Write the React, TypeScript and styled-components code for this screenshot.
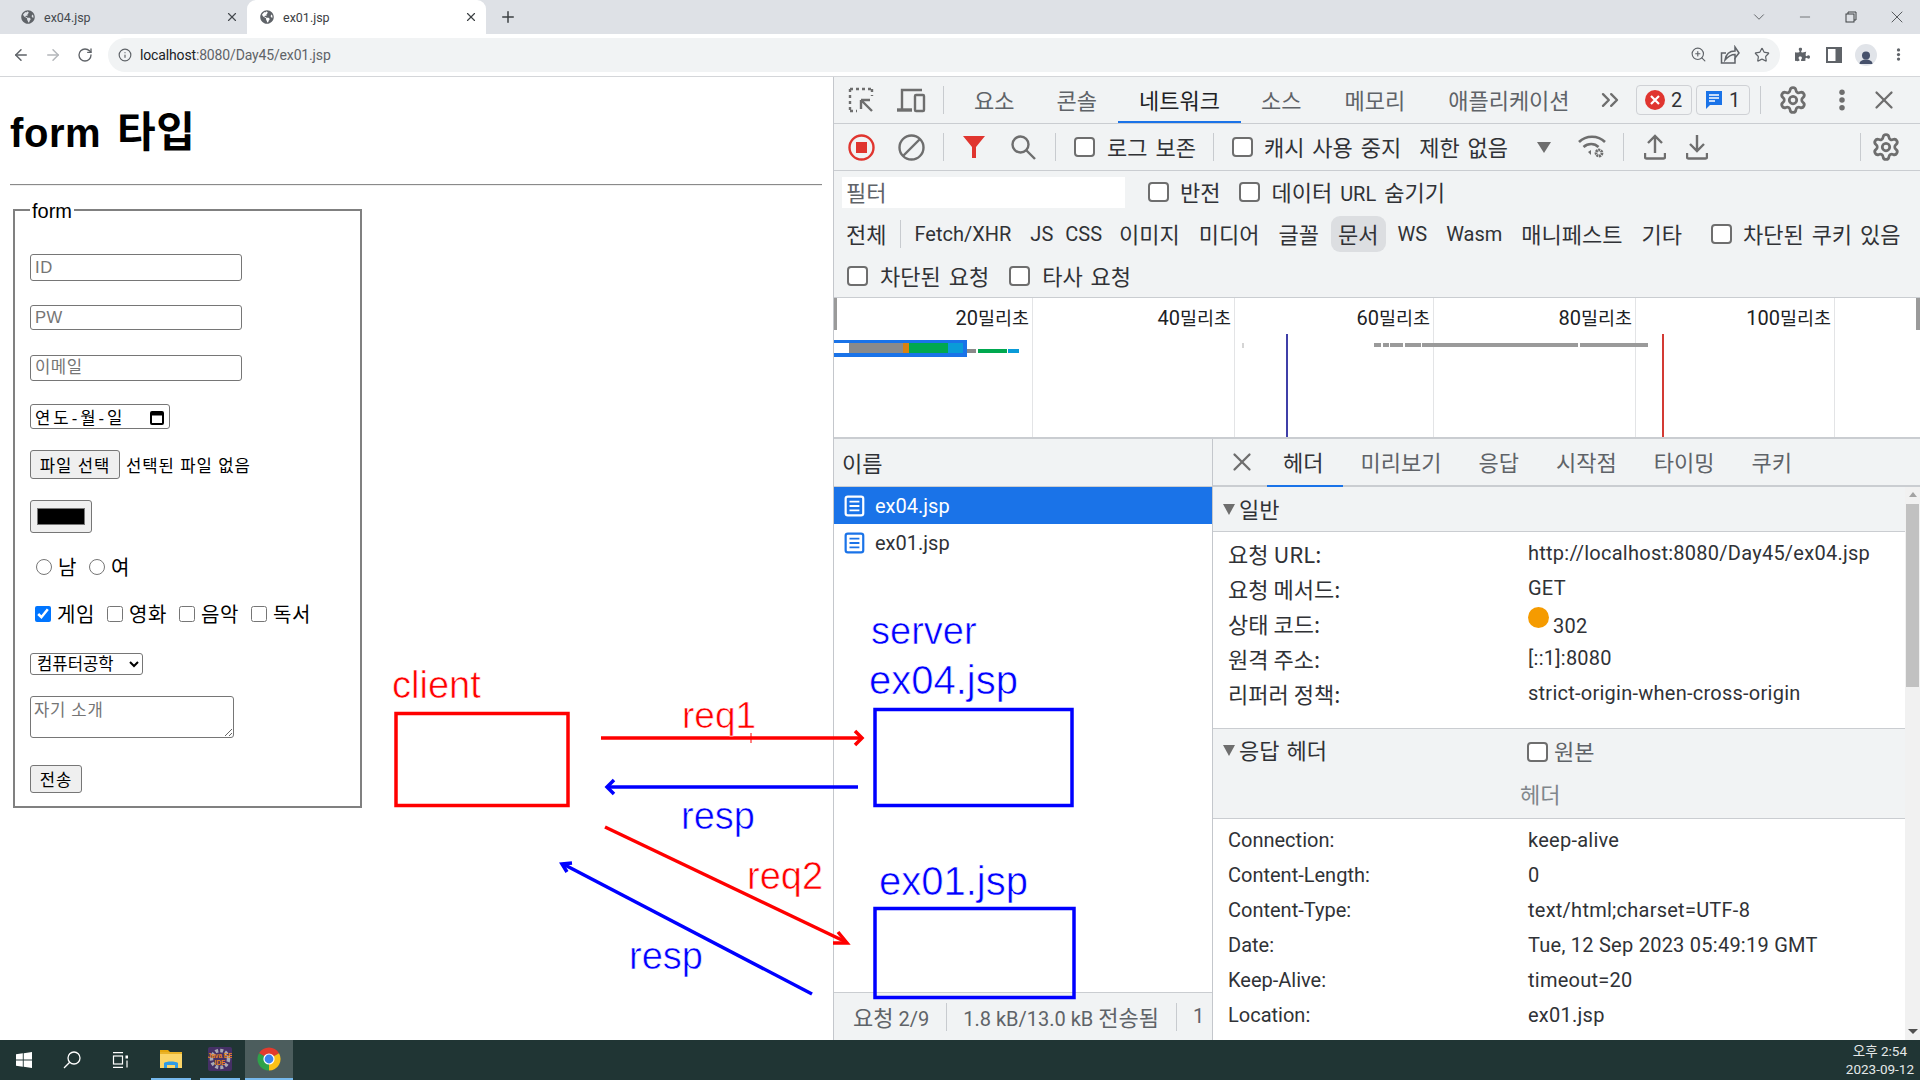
import React from 'react';
import styled, { createGlobalStyle } from 'styled-components';
import {
	ArrowLeft,
	ArrowRight,
	ChevronDown,
	ChevronsRight,
	Info,
	Minus,
	Plus,
	RotateCw,
	Settings,
	Star,
	X,
	ZoomIn,
} from 'lucide-react';
import { FaGlobeAmericas, FaPuzzlePiece } from 'react-icons/fa';

const KO = '"Noto Sans CJK KR", sans-serif';
const UI = 'Roboto, "Noto Sans CJK KR", sans-serif';
const PAGE = '"Liberation Sans", "Noto Sans CJK KR", sans-serif';

const GlobalStyle = createGlobalStyle`
	html, body {
		margin: 0;
		padding: 0;
		background: #fff;
	}
	* {
		box-sizing: border-box;
	}
`;

const Screen = styled.div`
	position: relative;
	display: flex;
	flex-direction: column;
	width: 1920px;
	height: 1080px;
	overflow: hidden;
	font-family: ${UI};
	color: #202124;
`;

/* browser chrome */

const TabStrip = styled.div`
	display: flex;
	align-items: stretch;
	height: 34px;
	background: #dee1e6;
`;

const Tab = styled.div<{ $active?: boolean }>`
	display: flex;
	align-items: center;
	width: ${(p) => (p.$active ? 239 : 247)}px;
	padding: 0 8px 0 ${(p) => (p.$active ? 13 : 21)}px;
	border-radius: 9px 9px 0 0;
	background: ${(p) => (p.$active ? '#fff' : 'transparent')};
	font-size: 12.5px;
	color: ${(p) => (p.$active ? '#3c4043' : '#45494e')};
	svg {
		flex: none;
	}
`;

const TabTitle = styled.span`
	flex: 1;
	margin-left: 9px;
`;

const NewTab = styled.div`
	display: flex;
	align-items: center;
	margin-left: 13px;
	color: #3c4043;
`;

const WindowControls = styled.div`
	display: flex;
	align-items: center;
	margin-left: auto;
	color: #3c4043;
`;

const WindowButton = styled.div`
	display: flex;
	align-items: center;
	justify-content: center;
	width: 46px;
	height: 28px;
`;

const AddressRow = styled.div`
	display: flex;
	align-items: center;
	height: 43px;
	padding-bottom: 1px;
	border-bottom: 1px solid #d4d6d9;
	background: #fff;
	color: #5f6368;
`;

const NavButton = styled.div`
	display: flex;
	align-items: center;
	justify-content: center;
	flex: none;
	width: 32px;
`;

const NavGroup = styled.div`
	display: flex;
	width: 108px;
	padding-left: 5px;
`;

const Omnibox = styled.div`
	display: flex;
	align-items: center;
	width: 1672px;
	height: 34px;
	padding: 0 7px 0 10px;
	border-radius: 17px;
	background: #f1f3f4;
`;

const Url = styled.span`
	margin-left: 8px;
	font-size: 14px;
	letter-spacing: -0.15px;
	color: #5f6368;
	b {
		font-weight: 400;
		color: #202124;
	}
`;

const OmniIcons = styled.div`
	display: flex;
	align-items: center;
	gap: 10px;
	margin-left: auto;
`;

const OmniIcon = styled.div`
	display: flex;
	justify-content: center;
	width: 22px;
`;

const BrowserIcons = styled.div`
	display: flex;
	align-items: center;
	padding-left: 6px;
`;

const BrowserIcon = styled.div`
	display: flex;
	align-items: center;
	justify-content: center;
	width: 32px;
`;

const Avatar = styled.div`
	display: flex;
	align-items: flex-end;
	justify-content: center;
	width: 22px;
	height: 22px;
	border-radius: 50%;
	background: #e1e4e9;
	overflow: hidden;
`;

/* main area */

const Main = styled.div`
	display: flex;
	flex: 1;
	min-height: 0;
`;

const Page = styled.div`
	width: 833px;
	padding: 0 11px 0 10px;
	font-family: ${PAGE};
	color: #000;
`;

const Heading = styled.h1`
	margin: 0;
	height: 107px;
	padding-top: 33px;
	font-size: 40px;
	line-height: 46px;
	font-weight: 700;
	word-spacing: 4px;
	letter-spacing: 0.6px;
	span {
		font-size: 42px;
	}
`;

const Rule = styled.hr`
	margin: 0;
	height: 2px;
	border: none;
	border-top: 1px solid #8a8a8a;
	border-bottom: 1px solid #eee;
`;

const Fieldset = styled.fieldset`
	display: flex;
	flex-direction: column;
	align-items: flex-start;
	width: 349px;
	height: 610px;
	margin: 12px 0 0 3px;
	padding: 0 15px;
	border: 2px solid #808080;
	font-size: 20px;
`;

const Legend = styled.legend`
	padding: 0 2px;
	margin-left: 0;
	font-size: 20px;
	line-height: 23px;
	transform: translateY(2px);
`;

const TextInput = styled.input<{ $top: number; $h: number }>`
	width: 212px;
	height: ${(p) => p.$h}px;
	margin-top: ${(p) => p.$top}px;
	padding: 0 4px;
	border: 1px solid #767676;
	border-radius: 3px;
	outline: none;
	background: #fff;
	font-family: ${PAGE};
	font-size: 16.67px;
	&::placeholder {
		color: #757575;
		letter-spacing: 0.5px;
	}
`;

const DateField = styled.div`
	display: flex;
	align-items: center;
	justify-content: space-between;
	width: 140px;
	height: 25px;
	margin-top: 23px;
	padding: 0 4px 0 4px;
	border: 1px solid #767676;
	border-radius: 3px;
	font-size: 16.67px;
	letter-spacing: 3px;
	white-space: pre;
`;

const FileRow = styled.div`
	display: flex;
	align-items: center;
	gap: 6px;
	margin-top: 21px;
	font-size: 16.67px;
	letter-spacing: 0.9px;
`;

const NativeButton = styled.button<{ $w: number; $h: number }>`
	width: ${(p) => p.$w}px;
	height: ${(p) => p.$h}px;
	padding: 0;
	border: 1px solid #767676;
	border-radius: 3px;
	background: #efefef;
	color: #000;
	font-family: ${PAGE};
	font-size: 16.67px;
	letter-spacing: 0.9px;
`;

const ColorWell = styled.div`
	display: flex;
	width: 62px;
	height: 33px;
	margin-top: 21px;
	padding: 7px 6px;
	border: 1px solid #767676;
	border-radius: 3px;
	background: #efefef;
`;

const ColorSwatch = styled.div`
	flex: 1;
	border: 1px solid #777;
	background: #000;
`;

const ChoiceRow = styled.div<{ $top: number; $pad: number }>`
	display: flex;
	align-items: center;
	height: 25px;
	margin-top: ${(p) => p.$top}px;
	padding-left: ${(p) => p.$pad}px;
	letter-spacing: 0.6px;
`;

const Radio = styled.input.attrs({ type: 'radio' })`
	width: 16px;
	height: 16px;
	margin: 0 6px 0 0;
`;

const Check = styled.input.attrs({ type: 'checkbox' })`
	width: 16px;
	height: 16px;
	margin: 0 6px 0 0;
	accent-color: #0075ff;
`;

const ChoiceText = styled.span`
	margin-right: 12px;
`;

const Select = styled.select`
	width: 113px;
	height: 22px;
	margin-top: 27px;
	padding: 0 0 0 2px;
	border: 1px solid #767676;
	border-radius: 3px;
	background: #fff;
	font-family: ${PAGE};
	font-size: 16.67px;
`;

const Textarea = styled.textarea`
	width: 204px;
	height: 42px;
	margin-top: 21px;
	padding: 0 3px;
	border: 1px solid #767676;
	border-radius: 3px;
	outline: none;
	font-family: ${PAGE};
	font-size: 16.67px;
	&::placeholder {
		color: #757575;
		letter-spacing: 0.7px;
	}
`;

const SubmitGap = styled.div`
	margin-top: 27px;
`;

/* devtools */

const Devtools = styled.div`
	display: flex;
	flex-direction: column;
	flex: 1;
	min-width: 0;
	border-left: 1px solid #c4c7cc;
	background: #f1f3f4;
`;

const Bar = styled.div<{ $h: number; $border?: boolean }>`
	display: flex;
	align-items: center;
	flex: none;
	height: ${(p) => p.$h}px;
	border-bottom: ${(p) => (p.$border ? '1px solid #cacdd1' : 'none')};
	font-size: 20px;
	white-space: nowrap;
`;

const IconSlot = styled.div<{ $w: number; $ml?: number }>`
	display: flex;
	align-items: center;
	justify-content: center;
	flex: none;
	width: ${(p) => p.$w}px;
	margin-left: ${(p) => p.$ml || 0}px;
	color: #6e6e6e;
`;

const Sep = styled.div<{ $ml: number }>`
	flex: none;
	width: 1px;
	height: 28px;
	margin-left: ${(p) => p.$ml}px;
	background: #c8cbcf;
`;

const PanelTab = styled.div<{ $active?: boolean; $ml: number }>`
	position: relative;
	display: flex;
	align-items: center;
	height: 100%;
	padding-bottom: 2px;
	margin-left: ${(p) => p.$ml}px;
	font-family: ${KO};
	font-size: 22px;
	color: ${(p) => (p.$active ? '#202124' : '#5f6368')};
	&::after {
		content: '';
		display: ${(p) => (p.$active ? 'block' : 'none')};
		position: absolute;
		left: -21px;
		right: -21px;
		bottom: 0;
		height: 2px;
		background: #1a73e8;
	}
`;

const CountBadge = styled.div<{ $w: number; $ml: number }>`
	display: flex;
	align-items: center;
	justify-content: center;
	gap: 6px;
	flex: none;
	width: ${(p) => p.$w}px;
	height: 30px;
	margin-left: ${(p) => p.$ml}px;
	border: 1px solid #cfd1d5;
	border-radius: 4px;
	font-size: 20px;
	color: #303236;
`;

const Box = styled.input.attrs({ type: 'checkbox' })<{ $ml: number }>`
	flex: none;
	appearance: none;
	width: 21px;
	height: 20px;
	margin: 0 0 0 ${(p) => p.$ml}px;
	border: 2px solid #6e6e6e;
	border-radius: 4px;
	background: #fff;
`;

const BarLabel = styled.span<{ $ml: number }>`
	margin-left: ${(p) => p.$ml}px;
	padding-bottom: 2px;
	font-family: ${KO};
	font-size: 22px;
	word-spacing: 3px;
	color: #303236;
`;

const DownCaret = styled.div<{ $ml: number }>`
	flex: none;
	width: 0;
	height: 0;
	margin-left: ${(p) => p.$ml}px;
	border-left: 7px solid transparent;
	border-right: 7px solid transparent;
	border-top: 11px solid #6e6e6e;
`;

const FilterPanel = styled.div`
	display: flex;
	flex-direction: column;
	flex: none;
`;

const FilterInput = styled.input`
	flex: none;
	width: 283px;
	height: 31px;
	margin-left: 8px;
	padding: 0 4px 2px;
	border: none;
	outline: none;
	background: #fff;
	font-family: ${KO};
	font-size: 22px;
	&::placeholder {
		color: #5f6368;
	}
`;

const TypePill = styled.div<{ $active?: boolean; $ml?: number; $ko?: boolean }>`
	display: flex;
	align-items: center;
	flex: none;
	height: 36px;
	margin-left: ${(p) => (p.$ml === undefined ? 5 : p.$ml)}px;
	padding: 0 7px ${(p) => (p.$ko ? 2 : 0)}px;
	border-radius: 9px;
	background: ${(p) => (p.$active ? '#dcdee1' : 'transparent')};
	font-family: ${(p) => (p.$ko ? KO : UI)};
	font-size: ${(p) => (p.$ko ? 22 : 20)}px;
	color: #303236;
`;

const Overview = styled.div`
	position: relative;
	display: grid;
	grid-template-columns: 199px 202px 199px 202px 199px 85px;
	flex: none;
	height: 142px;
	border-top: 1px solid #cacdd1;
	border-bottom: 2px solid #cacdd1;
	background: #fff;
`;

const OverviewCol = styled.div`
	padding: 5px 3px 0 0;
	border-right: 1px solid #e3e4e6;
	text-align: right;
	font-size: 20px;
	line-height: 28px;
	white-space: nowrap;
	&:last-of-type {
		border-right: none;
	}
`;

const OverviewUnit = styled.span`
	font-family: ${KO};
	font-size: 18.5px;
`;

const InlineLatin = styled.span`
	font-family: ${UI};
	font-size: 20px;
`;

const OverviewChart = styled.svg`
	position: absolute;
	left: 0;
	top: 0;
	width: 1086px;
	height: 139px;
`;

const Split = styled.div`
	display: flex;
	flex: 1;
	min-height: 0;
`;

const NamePane = styled.div`
	display: flex;
	flex-direction: column;
	flex: none;
	width: 379px;
	border-right: 1px solid #c4c7cc;
	background: #fff;
`;

const NameHeader = styled.div`
	display: flex;
	align-items: center;
	flex: none;
	height: 48px;
	padding: 0 0 2px 8px;
	border-bottom: 1px solid #cacdd1;
	background: #f1f3f4;
	font-family: ${KO};
	font-size: 22px;
	color: #303236;
`;

const NameRow = styled.div<{ $selected?: boolean }>`
	display: flex;
	align-items: center;
	gap: 9px;
	flex: none;
	height: 37px;
	padding-left: 10px;
	background: ${(p) => (p.$selected ? '#1a73e8' : '#fff')};
	color: ${(p) => (p.$selected ? '#fff' : '#303236')};
	font-size: 20px;
`;

const NameFill = styled.div`
	flex: 1;
`;

const StatusBar = styled.div`
	display: flex;
	align-items: center;
	flex: none;
	height: 48px;
	border-top: 1px solid #cacdd1;
	background: #f1f3f4;
	font-size: 20px;
	color: #5f6368;
	white-space: nowrap;
`;

const StatusText = styled.span<{ $ml: number }>`
	margin-left: ${(p) => p.$ml}px;
	padding-bottom: 2px;
`;

const Ko = styled.span`
	font-family: ${KO};
	font-size: 22px;
`;

const DetailPane = styled.div`
	display: flex;
	flex-direction: column;
	flex: 1;
	min-width: 0;
`;

const DetailTabs = styled.div`
	display: flex;
	align-items: stretch;
	flex: none;
	height: 48px;
	border-bottom: 2px solid #cacdd1;
	color: #5f6368;
`;

const DetailTab = styled.div<{ $active?: boolean; $ml: number }>`
	position: relative;
	display: flex;
	align-items: center;
	padding-bottom: 3px;
	margin-left: ${(p) => p.$ml}px;
	font-family: ${KO};
	font-size: 22px;
	color: ${(p) => (p.$active ? '#303236' : '#5f6368')};
	&::after {
		content: '';
		display: ${(p) => (p.$active ? 'block' : 'none')};
		position: absolute;
		left: -16px;
		right: -20px;
		bottom: -2px;
		height: 2px;
		background: #1a73e8;
	}
`;

const DetailBody = styled.div`
	display: flex;
	flex: 1;
	min-height: 0;
`;

const DetailScroll = styled.div`
	flex: 1;
	min-width: 0;
	overflow: hidden;
	background: #fff;
`;

const SectionHead = styled.div`
	display: flex;
	align-items: center;
	height: 45px;
	padding-left: 10px;
	border-bottom: 1px solid #cacdd1;
	background: #f1f3f4;
`;

const Triangle = styled.span`
	flex: none;
	width: 0;
	height: 0;
	margin-right: 4px;
	border-left: 6px solid transparent;
	border-right: 6px solid transparent;
	border-top: 11px solid #6e6e6e;
`;

const SectionTitle = styled.span`
	padding-bottom: 3px;
	font-family: ${KO};
	font-size: 22px;
	word-spacing: 2px;
	color: #303236;
`;

const Rows = styled.div<{ $top: number; $bottom: number; $line?: boolean }>`
	padding: ${(p) => p.$top}px 0 ${(p) => p.$bottom}px 15px;
	border-bottom: ${(p) => (p.$line ? '1px solid #cacdd1' : 'none')};
`;

const KeyValue = styled.div`
	display: grid;
	grid-template-columns: 300px 1fr;
	align-items: center;
	height: 35px;
	font-size: 20px;
	color: #303236;
	white-space: nowrap;
`;

const Value = styled.span`
	letter-spacing: 0.25px;
`;

const StatusDot = styled.span`
	display: inline-block;
	width: 21px;
	height: 21px;
	margin-right: 4px;
	border-radius: 50%;
	background: #f59b00;
	vertical-align: 5px;
`;

const ResponseHead = styled.div`
	display: flex;
	flex-direction: column;
	height: 90px;
	border-bottom: 1px solid #cacdd1;
	background: #f1f3f4;
`;

const ResponseLine = styled.div`
	display: flex;
	align-items: center;
	height: 42px;
	padding-left: 10px;
`;

const RawToggle = styled.span`
	display: flex;
	align-items: center;
	margin-left: auto;
	width: 378px;
	font-family: ${KO};
	font-size: 22px;
	color: #5f6368;
`;

const RawBox = styled(Box)`
	margin-right: 6px;
	margin-top: 3px;
`;

const ResponseCaption = styled.div`
	padding-left: 307px;
	font-family: ${KO};
	font-size: 22px;
	line-height: 44px;
	color: #80868b;
`;

const Scrollbar = styled.div`
	display: flex;
	flex-direction: column;
	align-items: center;
	flex: none;
	width: 15px;
	background: #f1f1f1;
`;

const ScrollUp = styled.div`
	flex: none;
	margin-top: 5px;
	border-left: 4px solid transparent;
	border-right: 4px solid transparent;
	border-bottom: 5px solid #a3a3a3;
`;

const ScrollThumb = styled.div`
	flex: none;
	width: 13px;
	height: 183px;
	margin-top: 7px;
	background: #c1c1c1;
`;

const ScrollDown = styled.div`
	flex: none;
	margin-top: auto;
	margin-bottom: 6px;
	border-left: 5px solid transparent;
	border-right: 5px solid transparent;
	border-top: 5px solid #505050;
`;

/* taskbar */

const Taskbar = styled.div`
	display: flex;
	align-items: stretch;
	flex: none;
	height: 40px;
	background: #203534;
	color: #fff;
`;

const TaskSlot = styled.div<{ $w: number; $ml?: number; $open?: boolean; $active?: boolean }>`
	display: flex;
	align-items: center;
	justify-content: center;
	flex: none;
	width: ${(p) => p.$w}px;
	margin-left: ${(p) => p.$ml || 0}px;
	background: ${(p) => (p.$active ? '#4c5d5d' : 'transparent')};
	border-bottom: ${(p) => (p.$open ? '2px solid #76b9ed' : 'none')};
`;

const Clock = styled.div`
	display: flex;
	flex-direction: column;
	justify-content: center;
	align-items: center;
	margin-left: auto;
	margin-right: 6px;
	font-size: 13.5px;
	line-height: 18px;
	color: #e4e8e8;
`;

const Diagram = styled.svg`
	position: absolute;
	left: 0;
	top: 0;
	width: 1920px;
	height: 1080px;
	pointer-events: none;
	font-family: 'Liberation Sans', sans-serif;
`;

/* drawings */

const InspectIcon = () => (
	<svg width="26" height="26" viewBox="0 0 26 26" fill="none" stroke="#6e6e6e" strokeWidth="2.4">
		<path d="M2 2h22M2 2v22M2 24h7M24 2v7" strokeDasharray="3 3" />
		<path d="M13 13h9M13 13v9M13 13l11 11" />
	</svg>
);

const DeviceIcon = () => (
	<svg width="30" height="26" viewBox="0 0 30 26" fill="none" stroke="#6e6e6e" strokeWidth="2.4">
		<path d="M6 22V3h20" />
		<path d="M1 23h15" strokeWidth="3.4" />
		<rect x="19" y="8" width="9" height="16" rx="1" />
	</svg>
);

const RecordIcon = () => (
	<svg width="27" height="27" viewBox="0 0 27 27">
		<circle cx="13.5" cy="13.5" r="12" fill="none" stroke="#e0352f" strokeWidth="2.4" />
		<rect x="8" y="8" width="11" height="11" fill="#e0352f" />
	</svg>
);

const ClearIcon = () => (
	<svg width="27" height="27" viewBox="0 0 27 27" fill="none" stroke="#6e6e6e" strokeWidth="2.4">
		<circle cx="13.5" cy="13.5" r="12" />
		<path d="M5 22L22 5" />
	</svg>
);

const FunnelIcon = () => (
	<svg width="22" height="24" viewBox="0 0 22 24" fill="#e0352f">
		<path d="M0 1h22l-9 11v11H9V12z" />
	</svg>
);

const SearchIcon = () => (
	<svg width="25" height="25" viewBox="0 0 25 25" fill="none" stroke="#6e6e6e" strokeWidth="2.4">
		<circle cx="9.5" cy="9.5" r="8" />
		<path d="M15 15l9 9" />
	</svg>
);

const WifiGearIcon = () => (
	<svg width="28" height="26" viewBox="0 0 28 26" fill="none" stroke="#6e6e6e" strokeWidth="2.6">
		<path d="M1 8c7-7 19-7 26 0" />
		<path d="M5.5 13c4.5-4 11-4 15 0" />
		<path d="M10 18l3-2v5z" fill="#6e6e6e" stroke="none" />
		<circle cx="21" cy="19" r="3" strokeWidth="2.8" strokeDasharray="2 .6" />
	</svg>
);

const UploadIcon = () => (
	<svg width="22" height="26" viewBox="0 0 22 26" fill="none" stroke="#6e6e6e" strokeWidth="2.4">
		<path d="M11 19V2M4 9l7-7 7 7" />
		<path d="M1 19v4a1.5 1.5 0 0 0 1.5 1.5h17A1.5 1.5 0 0 0 21 23v-4" />
	</svg>
);

const DownloadIcon = () => (
	<svg width="22" height="26" viewBox="0 0 22 26" fill="none" stroke="#6e6e6e" strokeWidth="2.4">
		<path d="M11 1v16M4 10l7 7 7-7" />
		<path d="M1 19v4a1.5 1.5 0 0 0 1.5 1.5h17A1.5 1.5 0 0 0 21 23v-4" />
	</svg>
);

const DotsIcon = ({ fill, size }: { fill: string; size: number }) => (
	<svg width={size} height={size} viewBox="0 0 24 24" fill={fill}>
		<circle cx="12" cy="3.5" r="3" />
		<circle cx="12" cy="12" r="3" />
		<circle cx="12" cy="20.5" r="3" />
	</svg>
);

const ErrorIcon = () => (
	<svg width="20" height="20" viewBox="0 0 20 20">
		<circle cx="10" cy="10" r="10" fill="#e0352f" />
		<path d="M6 6l8 8M14 6l-8 8" stroke="#fff" strokeWidth="2.2" />
	</svg>
);

const MessageIcon = () => (
	<svg width="18" height="20" viewBox="0 0 18 20">
		<path d="M1 1h16v14H5l-4 4z" fill="#1a73e8" />
		<path d="M4 5h10M4 8h10M4 11h6" stroke="#fff" strokeWidth="1.4" />
	</svg>
);

const DocIcon = ({ selected }: { selected?: boolean }) => (
	<svg width="22" height="22" viewBox="0 0 20 20" fill="none">
		<rect
			x="1.5"
			y="1.5"
			width="16"
			height="17"
			rx="2"
			stroke={selected ? '#fff' : '#1a73e8'}
			strokeWidth="2"
			fill={selected ? 'transparent' : '#fff'}
		/>
		<path d="M5 6h9M5 10h9M5 14h9" stroke={selected ? '#fff' : '#1a73e8'} strokeWidth="1.6" />
	</svg>
);

const ShareIcon = () => (
	<svg width="20" height="20" viewBox="0 0 20 20" fill="none" stroke="#5f6368" strokeWidth="1.5">
		<path d="M6 18H1.5V8H6" />
		<path d="M6 18h9v-5" />
		<path d="M5 15c1-6 5-9 10-9V2l4 6-4 5V9.500c-4 0-7 2-10 5.500z" />
	</svg>
);

const SidePanelIcon = () => (
	<svg width="16" height="16" viewBox="0 0 16 16">
		<rect x="1" y="1" width="14" height="14" fill="none" stroke="#5f6368" strokeWidth="2" />
		<rect x="9.500" y="1" width="5.500" height="14" fill="#5f6368" />
	</svg>
);

const PersonIcon = () => (
	<svg width="16" height="18" viewBox="0 0 16 18" fill="#46516b">
		<circle cx="8" cy="7.500" r="4" />
		<path d="M1.500 16c0-3 3-4.500 6.500-4.500s6.500 1.500 6.500 4.500z" />
	</svg>
);

const RestoreIcon = () => (
	<svg width="12" height="12" viewBox="0 0 12 12" fill="none" stroke="#3c4043" strokeWidth="1">
		<rect x="1" y="3" width="8" height="8" />
		<path d="M3 3V1h8v8H9" />
	</svg>
);

const WindowsLogo = () => (
	<svg width="16" height="16" viewBox="0 0 16 16" fill="#fff">
		<path d="M0 2.300l6.800-1v6.300H0zM7.700 1.200L16 0v7.600H7.700zM0 8.400h6.800v6.300L0 13.700zM7.700 8.400H16V16l-8.300-1.200z" />
	</svg>
);

const TaskSearchIcon = () => (
	<svg width="18" height="18" viewBox="0 0 18 18" fill="none" stroke="#fff" strokeWidth="1.300">
		<circle cx="11" cy="7" r="6" />
		<path d="M6.700 11.300L1 17" />
	</svg>
);

const TaskViewIcon = () => (
	<svg width="17" height="16" viewBox="0 0 17 16" fill="none" stroke="#fff" strokeWidth="1.200">
		<path d="M1 0.700h10M1 15.300h10" />
		<rect x="1.500" y="4" width="9" height="8" />
		<rect x="13.500" y="3.500" width="2.500" height="3" fill="#fff" stroke="none" />
		<path d="M15 8.500v7" />
	</svg>
);

const ExplorerIcon = () => (
	<svg width="22" height="20" viewBox="0 0 22 20">
		<path d="M0 1h8l2 2H0z" fill="#e6a80f" />
		<rect y="3" width="22" height="16" fill="#fbd568" />
		<path d="M0 3h22v2H0z" fill="#e9b32a" />
		<path d="M4 19v-5c2-2 12-2 14 0v5h-3v-3H7v3z" fill="#2f9be6" />
	</svg>
);

const IdeIcon = () => (
	<svg width="24" height="24" viewBox="0 0 24 24">
		<rect width="24" height="24" rx="2" fill="#453066" />
		<circle cx="12" cy="12" r="8.500" fill="none" stroke="#a9a9b5" strokeWidth="3.500" strokeDasharray="3 2" />
		<text x="12" y="10.500" textAnchor="middle" fontSize="6.500" fontWeight="700" fill="#e8841c" fontFamily="Liberation Sans">
			Java EE
		</text>
		<text x="12" y="17.500" textAnchor="middle" fontSize="6.500" fontWeight="700" fill="#e8841c" fontFamily="Liberation Sans">
			IDE
		</text>
	</svg>
);

const ChromeIcon = () => (
	<svg width="24" height="24" viewBox="0 0 24 24">
		<path d="M2 6.200A11.600 11.600 0 0 1 22 6.200L12 12z" fill="#e33b2e" />
		<path d="M22 6.200A11.600 11.600 0 0 1 12 23.600L12 12z" fill="#fbc116" />
		<path d="M12 23.600A11.600 11.600 0 0 1 2 6.200L12 12z" fill="#2fa24a" />
		<circle cx="12" cy="12" r="5.600" fill="#fff" />
		<circle cx="12" cy="12" r="4.400" fill="#3b82f0" />
	</svg>
);

const CalendarIcon = () => (
	<svg width="16" height="16" viewBox="0 0 16 16" fill="none" stroke="#000" strokeWidth="2">
		<rect x="2" y="3" width="12" height="12" rx="1" />
		<path d="M2 5h12" strokeWidth="3" />
	</svg>
);

const Arrow = ({ d, head, color }: { d: string; head: string; color: string }) => (
	<g fill="none" stroke={color} strokeWidth="3.500">
		<path d={d} />
		<path d={head} strokeLinejoin="miter" />
	</g>
);

const DiagramOverlay = () => (
	<Diagram viewBox="0 0 1920 1080">
		<g fill="none" strokeWidth="3.500">
			<rect x="396" y="713.500" width="172" height="92" stroke="#ff0000" />
			<rect x="875" y="709.500" width="197" height="96" stroke="#0000ff" />
			<rect x="875" y="908.500" width="199" height="89" stroke="#0000ff" />
		</g>
		<Arrow d="M601 738H861" head="M855 731L862 738L855 745" color="#ff0000" />
		<path d="M751 733V743" stroke="#ff0000" strokeWidth="1" />
		<Arrow d="M858 787H608" head="M614 780L607 787L614 794" color="#0000ff" />
		<Arrow d="M605 827L846 942" head="M838 932L847 943L833 943" color="#ff0000" />
		<Arrow d="M812 994L563 864" head="M572 863L562 864L567 872" color="#0000ff" />
		<g fontSize="38" fill="#ff0000" stroke="#fff" strokeWidth="0.6">
			<text x="392" y="698">client</text>
			<text x="682" y="728" fontSize="37">req1</text>
			<text x="747" y="889" fontSize="38">req2</text>
		</g>
		<g fontSize="38" fill="#0000ff" stroke="#fff" strokeWidth="0.6">
			<text x="871" y="644">server</text>
			<text x="869" y="694" fontSize="40">ex04.jsp</text>
			<text x="681" y="829">resp</text>
			<text x="629" y="969">resp</text>
			<text x="879" y="895" fontSize="40">ex01.jsp</text>
		</g>
	</Diagram>
);

const OverviewBars = () => (
	<OverviewChart viewBox="0 0 1086 139">
		<rect x="0" y="0" width="3" height="32" fill="#9a9a9a" />
		<rect x="1082" y="0" width="4" height="32" fill="#9a9a9a" />
		<g transform="translate(-834 -297)">
			<rect x="834" y="339" width="133" height="17" fill="#1a73e8" />
			<rect x="834" y="342" width="15" height="10" fill="#fff" />
			<rect x="849" y="342" width="54" height="10" fill="#8a8a8a" />
			<rect x="903" y="342" width="6" height="10" fill="#d9820f" />
			<rect x="909" y="342" width="39" height="10" fill="#00a84f" />
			<rect x="948" y="342" width="15" height="10" fill="#0a9bd8" />
			<rect x="967" y="348" width="9" height="4" fill="#8a8a8a" />
			<rect x="978" y="348" width="29" height="4" fill="#00a84f" />
			<rect x="1008" y="348" width="11" height="4" fill="#0a9bd8" />
			<rect x="1242" y="342" width="2" height="5" fill="#d5d5d5" />
			<g fill="#9a9a9a">
				<rect x="1374" y="342" width="7" height="4" />
				<rect x="1383" y="342" width="6" height="4" />
				<rect x="1390" y="342" width="13" height="4" />
				<rect x="1405" y="342" width="16" height="4" />
				<rect x="1422" y="342" width="156" height="4" />
				<rect x="1580" y="342" width="68" height="4" />
			</g>
			<rect x="1286" y="333" width="2" height="105" fill="#3f3fa8" />
			<rect x="1662" y="333" width="2" height="105" fill="#d33a34" />
		</g>
	</OverviewChart>
);

const filterTypes = [
	{ label: 'Fetch/XHR', ml: 6 },
	{ label: 'JS' },
	{ label: 'CSS', ml: -2 },
	{ label: '이미지', ko: true, ml: 3 },
	{ label: '미디어', ko: true },
	{ label: '글꼴', ko: true },
	{ label: '문서', ko: true, active: true },
	{ label: 'WS', ml: 5 },
	{ label: 'Wasm' },
	{ label: '매니페스트', ko: true },
	{ label: '기타', ko: true },
];

const generalRows: [React.ReactNode, React.ReactNode][] = [
	[<Ko key="k">요청 URL:</Ko>, 'http://localhost:8080/Day45/ex04.jsp'],
	[<Ko key="k">요청 메서드:</Ko>, 'GET'],
	[
		<Ko key="k">상태 코드:</Ko>,
		<span key="v">
			<StatusDot />
			302
		</span>,
	],
	[<Ko key="k">원격 주소:</Ko>, '[::1]:8080'],
	[<Ko key="k">리퍼러 정책:</Ko>, 'strict-origin-when-cross-origin'],
];

const responseRows: [string, string][] = [
	['Connection:', 'keep-alive'],
	['Content-Length:', '0'],
	['Content-Type:', 'text/html;charset=UTF-8'],
	['Date:', 'Tue, 12 Sep 2023 05:49:19 GMT'],
	['Keep-Alive:', 'timeout=20'],
	['Location:', 'ex01.jsp'],
];

const App = () => {
	return (
		<Screen>
			<GlobalStyle />
			<TabStrip>
				<Tab>
					<FaGlobeAmericas size={14} color="#5f6368" />
					<TabTitle>ex04.jsp</TabTitle>
					<X size={14} strokeWidth={2} />
				</Tab>
				<Tab $active>
					<FaGlobeAmericas size={14} color="#5f6368" />
					<TabTitle>ex01.jsp</TabTitle>
					<X size={14} strokeWidth={2} />
				</Tab>
				<NewTab>
					<Plus size={18} strokeWidth={2} />
				</NewTab>
				<WindowControls>
					<WindowButton>
						<ChevronDown size={18} strokeWidth={1} />
					</WindowButton>
					<WindowButton>
						<Minus size={16} strokeWidth={1} />
					</WindowButton>
					<WindowButton>
						<RestoreIcon />
					</WindowButton>
					<WindowButton>
						<X size={20} strokeWidth={1} />
					</WindowButton>
				</WindowControls>
			</TabStrip>
			<AddressRow>
				<NavGroup>
					<NavButton>
						<ArrowLeft size={18} strokeWidth={2} />
					</NavButton>
					<NavButton>
						<ArrowRight size={18} strokeWidth={2} color="#b4b7bb" />
					</NavButton>
					<NavButton>
						<RotateCw size={16} strokeWidth={2} />
					</NavButton>
				</NavGroup>
				<Omnibox>
					<Info size={14} strokeWidth={2} />
					<Url>
						<b>localhost</b>:8080/Day45/ex01.jsp
					</Url>
					<OmniIcons>
						<OmniIcon>
							<ZoomIn size={17} strokeWidth={1.6} />
						</OmniIcon>
						<OmniIcon>
							<ShareIcon />
						</OmniIcon>
						<OmniIcon>
							<Star size={16} strokeWidth={1.8} />
						</OmniIcon>
					</OmniIcons>
				</Omnibox>
				<BrowserIcons>
					<BrowserIcon>
						<FaPuzzlePiece size={15} />
					</BrowserIcon>
					<BrowserIcon>
						<SidePanelIcon />
					</BrowserIcon>
					<BrowserIcon>
						<Avatar>
							<PersonIcon />
						</Avatar>
					</BrowserIcon>
					<BrowserIcon>
						<DotsIcon fill="#5f6368" size={13} />
					</BrowserIcon>
				</BrowserIcons>
			</AddressRow>
			<Main>
				<Page>
					<Heading>
						form <span>타입</span>
					</Heading>
					<Rule />
					<Fieldset>
						<Legend>form</Legend>
						<TextInput $top={33} $h={27} placeholder="ID" />
						<TextInput $top={24} $h={25} placeholder="PW" />
						<TextInput $top={25} $h={26} placeholder="이메일" />
						<DateField>
							<span>연도-월-일</span>
							<CalendarIcon />
						</DateField>
						<FileRow>
							<NativeButton type="button" $w={90} $h={29}>
								파일 선택
							</NativeButton>
							<span>선택된 파일 없음</span>
						</FileRow>
						<ColorWell>
							<ColorSwatch />
						</ColorWell>
						<ChoiceRow $top={21} $pad={6}>
							<Radio name="gender" />
							<ChoiceText>남</ChoiceText>
							<Radio name="gender" />
							<ChoiceText>여</ChoiceText>
						</ChoiceRow>
						<ChoiceRow $top={22} $pad={5}>
							<Check defaultChecked />
							<ChoiceText>게임</ChoiceText>
							<Check />
							<ChoiceText>영화</ChoiceText>
							<Check />
							<ChoiceText>음악</ChoiceText>
							<Check />
							<ChoiceText>독서</ChoiceText>
						</ChoiceRow>
						<Select defaultValue="cs">
							<option value="cs">컴퓨터공학</option>
						</Select>
						<Textarea placeholder="자기 소개" />
						<SubmitGap>
							<NativeButton type="submit" $w={52} $h={28}>
								전송
							</NativeButton>
						</SubmitGap>
					</Fieldset>
				</Page>
				<Devtools>
					<Bar $h={47} $border>
						<IconSlot $w={50} $ml={2}>
							<InspectIcon />
						</IconSlot>
						<IconSlot $w={50}>
							<DeviceIcon />
						</IconSlot>
						<Sep $ml={7} />
						<PanelTab $ml={30}>요소</PanelTab>
						<PanelTab $ml={42}>콘솔</PanelTab>
						<PanelTab $ml={42} $active>
							네트워크
						</PanelTab>
						<PanelTab $ml={41}>소스</PanelTab>
						<PanelTab $ml={43}>메모리</PanelTab>
						<PanelTab $ml={43}>애플리케이션</PanelTab>
						<IconSlot $w={30} $ml={25}>
							<ChevronsRight size={28} strokeWidth={2} />
						</IconSlot>
						<CountBadge $w={56} $ml={11}>
							<ErrorIcon />2
						</CountBadge>
						<CountBadge $w={54} $ml={4}>
							<MessageIcon />1
						</CountBadge>
						<Sep $ml={10} />
						<IconSlot $w={40} $ml={12}>
							<Settings size={30} strokeWidth={2.2} />
						</IconSlot>
						<IconSlot $w={30} $ml={14}>
							<DotsIcon fill="#6e6e6e" size={22} />
						</IconSlot>
						<IconSlot $w={30} $ml={12}>
							<X size={34} strokeWidth={1.8} />
						</IconSlot>
					</Bar>
					<Bar $h={47} $border>
						<IconSlot $w={50} $ml={2}>
							<RecordIcon />
						</IconSlot>
						<IconSlot $w={50}>
							<ClearIcon />
						</IconSlot>
						<Sep $ml={7} />
						<IconSlot $w={40} $ml={10}>
							<FunnelIcon />
						</IconSlot>
						<IconSlot $w={40} $ml={9}>
							<SearchIcon />
						</IconSlot>
						<Sep $ml={12} />
						<Box $ml={18} />
						<BarLabel $ml={12}>로그 보존</BarLabel>
						<Sep $ml={17} />
						<Box $ml={18} />
						<BarLabel $ml={11}>캐시 사용 중지</BarLabel>
						<BarLabel $ml={18}>제한 없음</BarLabel>
						<DownCaret $ml={29} />
						<IconSlot $w={36} $ml={23}>
							<WifiGearIcon />
						</IconSlot>
						<Sep $ml={13} />
						<IconSlot $w={36} $ml={13}>
							<UploadIcon />
						</IconSlot>
						<IconSlot $w={36} $ml={6}>
							<DownloadIcon />
						</IconSlot>
						<Sep $ml={145} />
						<IconSlot $w={40} $ml={5}>
							<Settings size={30} strokeWidth={2.2} />
						</IconSlot>
					</Bar>
					<FilterPanel>
						<Bar $h={42}>
							<FilterInput placeholder="필터" />
							<Box $ml={23} />
							<BarLabel $ml={11}>반전</BarLabel>
							<Box $ml={19} />
							<BarLabel $ml={11}>
								데이터 <InlineLatin>URL</InlineLatin> 숨기기
							</BarLabel>
						</Bar>
						<Bar $h={42}>
							<TypePill $ml={5} $ko>
								전체
							</TypePill>
							<Sep $ml={7} />
							{filterTypes.map((t) => (
								<TypePill key={t.label} $ml={t.ml} $ko={t.ko} $active={t.active}>
									{t.label}
								</TypePill>
							))}
							<Box $ml={22} />
							<BarLabel $ml={11}>차단된 쿠키 있음</BarLabel>
						</Bar>
						<Bar $h={42}>
							<Box $ml={13} />
							<BarLabel $ml={12}>차단된 요청</BarLabel>
							<Box $ml={20} />
							<BarLabel $ml={12}>타사 요청</BarLabel>
						</Bar>
					</FilterPanel>
					<Overview>
						<OverviewCol>
							20<OverviewUnit>밀리초</OverviewUnit>
						</OverviewCol>
						<OverviewCol>
							40<OverviewUnit>밀리초</OverviewUnit>
						</OverviewCol>
						<OverviewCol>
							60<OverviewUnit>밀리초</OverviewUnit>
						</OverviewCol>
						<OverviewCol>
							80<OverviewUnit>밀리초</OverviewUnit>
						</OverviewCol>
						<OverviewCol>
							100<OverviewUnit>밀리초</OverviewUnit>
						</OverviewCol>
						<OverviewCol />
						<OverviewBars />
					</Overview>
					<Split>
						<NamePane>
							<NameHeader>이름</NameHeader>
							<NameRow $selected>
								<DocIcon selected />
								ex04.jsp
							</NameRow>
							<NameRow>
								<DocIcon />
								ex01.jsp
							</NameRow>
							<NameFill />
							<StatusBar>
								<StatusText $ml={19}>
									<Ko>요청</Ko> 2/9
								</StatusText>
								<Sep $ml={17} />
								<StatusText $ml={16}>
									1.8 kB/13.0 kB <Ko>전송됨</Ko>
								</StatusText>
								<Sep $ml={17} />
								<StatusText $ml={16}>1</StatusText>
							</StatusBar>
						</NamePane>
						<DetailPane>
							<DetailTabs>
								<IconSlot $w={30} $ml={14}>
									<X size={32} strokeWidth={1.8} />
								</IconSlot>
								<DetailTab $ml={26} $active>
									헤더
								</DetailTab>
								<DetailTab $ml={37}>미리보기</DetailTab>
								<DetailTab $ml={37}>응답</DetailTab>
								<DetailTab $ml={37}>시작점</DetailTab>
								<DetailTab $ml={37}>타이밍</DetailTab>
								<DetailTab $ml={37}>쿠키</DetailTab>
							</DetailTabs>
							<DetailBody>
								<DetailScroll>
									<SectionHead>
										<Triangle />
										<SectionTitle>일반</SectionTitle>
									</SectionHead>
									<Rows $top={3} $bottom={18} $line>
										{generalRows.map(([k, v], i) => (
											<KeyValue key={i}>
												<span>{k}</span>
												<Value>{v}</Value>
											</KeyValue>
										))}
									</Rows>
									<ResponseHead>
										<ResponseLine>
											<Triangle />
											<SectionTitle>응답 헤더</SectionTitle>
											<RawToggle>
												<RawBox $ml={0} />
												원본
											</RawToggle>
										</ResponseLine>
										<ResponseCaption>헤더</ResponseCaption>
									</ResponseHead>
									<Rows $top={3} $bottom={0}>
										{responseRows.map(([k, v]) => (
											<KeyValue key={k}>
												<span>{k}</span>
												<Value>{v}</Value>
											</KeyValue>
										))}
									</Rows>
								</DetailScroll>
								<Scrollbar>
									<ScrollUp />
									<ScrollThumb />
									<ScrollDown />
								</Scrollbar>
							</DetailBody>
						</DetailPane>
					</Split>
				</Devtools>
			</Main>
			<Taskbar>
				<TaskSlot $w={48}>
					<WindowsLogo />
				</TaskSlot>
				<TaskSlot $w={48}>
					<TaskSearchIcon />
				</TaskSlot>
				<TaskSlot $w={48}>
					<TaskViewIcon />
				</TaskSlot>
				<TaskSlot $w={40} $ml={7} $open>
					<ExplorerIcon />
				</TaskSlot>
				<TaskSlot $w={40} $ml={9} $open>
					<IdeIcon />
				</TaskSlot>
				<TaskSlot $w={48} $ml={5} $open $active>
					<ChromeIcon />
				</TaskSlot>
				<Clock>
					<span>오후 2:54</span>
					<span>2023-09-12</span>
				</Clock>
			</Taskbar>
			<DiagramOverlay />
		</Screen>
	);
};

export default App;
